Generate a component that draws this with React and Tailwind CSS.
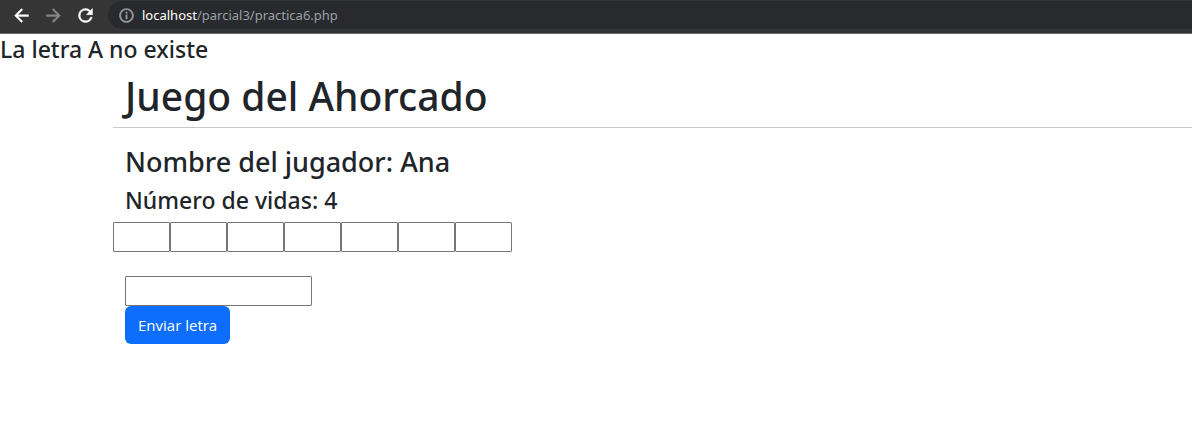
import React from "react";

const SLOTS = [1, 2, 3, 4, 5, 6, 7];

const ICONS = {
  back: "M20 11H7.83l5.59-5.59L12 4l-8 8 8 8 1.41-1.41L7.83 13H20v-2z",
  forward: "M12 4l-1.41 1.41L16.17 11H4v2h12.17l-5.58 5.59L12 20l8-8z",
  reload:
    "M17.65 6.35A7.958 7.958 0 0 0 12 4a8 8 0 1 0 7.73 10h-2.08A6 6 0 1 1 12 6c1.66 0 3.14.69 4.22 1.78L13 11h7V4l-2.35 2.35z",
  info: "M11 7h2v2h-2zm0 4h2v6h-2zm1-9C6.48 2 2 6.48 2 12s4.48 10 10 10 10-4.48 10-10S17.52 2 12 2zm0 18c-4.41 0-8-3.59-8-8s3.59-8 8-8 8 3.59 8 8-3.59 8-8 8z",
};

function Icon({ name, size }) {
  return (
    <svg
      width={size}
      height={size}
      viewBox="0 0 24 24"
      fill="currentColor"
      stroke="currentColor"
      strokeWidth="0.5"
      aria-hidden="true"
    >
      <path d={ICONS[name]} />
    </svg>
  );
}

function BrowserBar() {
  return (
    <header className="flex h-[34px] items-start border-b border-[#6b6869] bg-[#353535] pt-px pl-[11px]">
      <nav aria-label="Navegador" className="flex h-7 items-center gap-[11px]">
        <button type="button" aria-label="Atrás" className="text-white">
          <Icon name="back" size={21} />
        </button>
        <button type="button" aria-label="Adelante" className="text-[#868686]">
          <Icon name="forward" size={21} />
        </button>
        <button type="button" aria-label="Recargar" className="text-white">
          <Icon name="reload" size={21} />
        </button>
      </nav>
      <div className="ml-3 flex h-7 flex-1 items-center gap-[7px] rounded-l-full bg-[#292a2d] pl-[10px] text-[#9aa0a6]">
        <Icon name="info" size={17} />
        <a href="#top" className="text-[13px] leading-5 text-[#9aa0a6]">
          <span className="text-white">localhost</span>/parcial3/practica6.php
        </a>
      </div>
    </header>
  );
}

export default function App() {
  return (
    <div id="top" className="min-h-screen bg-white font-['Noto_Sans','Open_Sans',sans-serif] text-base text-[#212529]">
      <BrowserBar />
      <h3 className="mb-[6px] text-[23px] leading-[31px] font-medium">La letra A no existe</h3>
      <main className="ml-[113px]">
        <h1 className="mb-[6px] px-3 text-[39px] leading-[50px] font-medium">Juego del Ahorcado</h1>
        <hr className="mb-4 border-t border-[#c8c9ca]" />
        <h2 className="mb-[6px] px-3 text-[27px] leading-[35px] font-medium">Nombre del jugador: Ana</h2>
        <h3 className="mb-[6px] px-3 text-[23px] leading-[31px] font-medium">Número de vidas: 4</h3>
        <div className="flex">
          {SLOTS.map((n) => (
            <input
              key={n}
              type="text"
              aria-label={`Letra ${n}`}
              readOnly
              className="h-[30px] w-[57px] rounded-[1px] border border-[#767676] bg-white px-1 text-center"
            />
          ))}
        </div>
        <form className="mt-6 flex flex-col items-start px-3" onSubmit={(e) => e.preventDefault()}>
          <input
            type="text"
            name="letra"
            aria-label="Letra"
            className="h-[30px] w-[187px] rounded-[1px] border border-[#767676] bg-white px-1"
          />
          <button
            type="submit"
            className="rounded-md bg-[#0d6efd] px-[13px] py-[7px] font-['Open_Sans','Noto_Sans',sans-serif] text-[15px] leading-6 text-white"
          >
            Enviar letra
          </button>
        </form>
      </main>
    </div>
  );
}
